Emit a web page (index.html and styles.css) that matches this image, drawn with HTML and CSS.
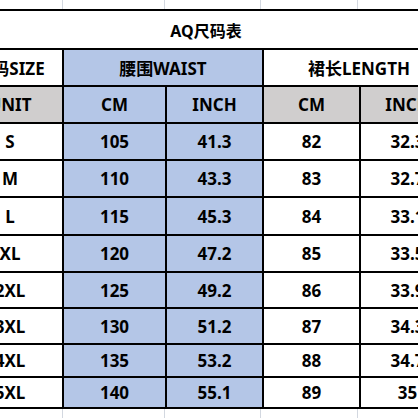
FILE: index.html
```html
<!DOCTYPE html>
<html>
<head>
<meta charset="utf-8">
<link rel="stylesheet" href="styles.css">
</head>
<body>
<div class="sheet">
  <div class="gridrow top"><span></span><span></span><span></span><span></span><span></span></div>
  <div class="table">
    <div class="c title">AQ尺码表</div>
    <div class="c">尺码SIZE</div>
    <div class="c blue span2">腰围WAIST</div>
    <div class="c span2">裙长LENGTH</div>
    <div class="c gray">UNIT</div>
    <div class="c blue">CM</div>
    <div class="c blue">INCH</div>
    <div class="c gray">CM</div>
    <div class="c gray">INCH</div>

    <div class="c">S</div><div class="c blue">105</div><div class="c blue">41.3</div><div class="c">82</div><div class="c">32.3</div>
    <div class="c">M</div><div class="c blue">110</div><div class="c blue">43.3</div><div class="c">83</div><div class="c">32.7</div>
    <div class="c">L</div><div class="c blue">115</div><div class="c blue">45.3</div><div class="c">84</div><div class="c">33.1</div>
    <div class="c">XL</div><div class="c blue">120</div><div class="c blue">47.2</div><div class="c">85</div><div class="c">33.5</div>
    <div class="c">2XL</div><div class="c blue">125</div><div class="c blue">49.2</div><div class="c">86</div><div class="c">33.9</div>
    <div class="c">3XL</div><div class="c blue">130</div><div class="c blue">51.2</div><div class="c">87</div><div class="c">34.3</div>
    <div class="c">4XL</div><div class="c blue">135</div><div class="c blue">53.2</div><div class="c">88</div><div class="c">34.7</div>
    <div class="c">5XL</div><div class="c blue">140</div><div class="c blue">55.1</div><div class="c">89</div><div class="c">35</div>
  </div>
  <div class="gridrow bottom"><span></span><span></span><span></span><span></span><span></span></div>
</div>
</body>
</html>
```

FILE: styles.css
```css
html, body {
  margin: 0;
  padding: 0;
  background: #ffffff;
  width: 418px;
  height: 418px;
  overflow: hidden;
}

.sheet {
  margin-left: -44px;
  width: 500px;
  font-family: "Noto Sans", "Noto Sans CJK SC", sans-serif;
  font-weight: bold;
  font-size: 17px;
  color: #000;
}

.gridrow {
  display: grid;
  grid-template-columns: 107px 102px 96px 97px 96px;
  height: 9px;
}

.gridrow.bottom {
  height: 12px;
}

.gridrow span {
  border-right: 1px solid #d3d8e0;
}

.table {
  display: grid;
  grid-template-columns: 104px 101px 95px 95px 93px;
  grid-template-rows: 37px 35px 35px 35px 35px 36px 35px 34px 34px 31px 29px;
  gap: 2px;
  padding: 2px;
  background: #000;
  width: max-content;
}

.c {
  background: #fff;
  display: flex;
  align-items: center;
  justify-content: center;
  white-space: nowrap;
}

.title {
  grid-column: 1 / span 5;
  font-size: 16px;
}

.span2 {
  grid-column: span 2;
}

.blue {
  background: #b4c6e7;
}

.gray {
  background: #d0cece;
}
```
